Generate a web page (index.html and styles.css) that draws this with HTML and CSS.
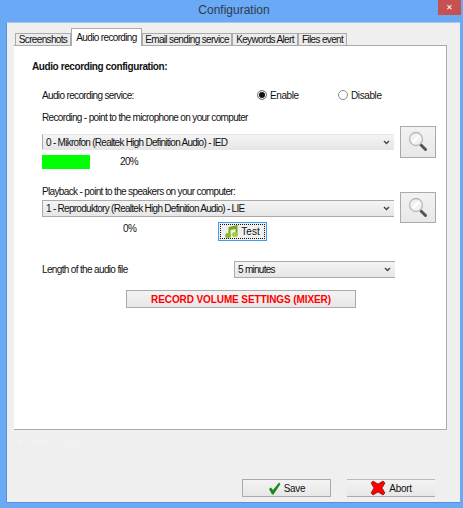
FILE: index.html
```html
<!DOCTYPE html>
<html lang="en">

<head>
    <meta charset="UTF-8">
    <title>Configuration</title>
    <link rel="stylesheet" href="styles.css">
</head>

<body>
<div class="titlebar">
    <span class="title">Configuration</span>
    <span class="close">&#10005;</span>
</div>
<div class="window">
    <div class="tabs">
        <div class="tab tab-screenshot">Screenshots</div>
        <div class="tab tab-audio active">Audio recording</div>
        <div class="tab tab-email">Email sending service</div>
        <div class="tab tab-keywords">Keywords Alert</div>
        <div class="tab tab-files">Files event</div>
    </div>
    <div class="panel">
        <div class="heading">Audio recording configuration:</div>
        <div class="service">
            <span class="service-label">Audio recording service:</span>
            <span class="radio-item enable"><span class="radio checked"></span>Enable</span>
            <span class="radio-item"><span class="radio"></span>Disable</span>
        </div>

        <div class="device device-rec">
            <div class="device-main">
                <div class="line">Recording - point to the microphone on your computer</div>
                <div class="combo combo-soft">
                    <span>0 - Mikrofon (Realtek High Definition Audio) - IED</span>
                    <svg class="chevron" width="7" height="5" viewBox="0 0 7 5"><path d="M1 1l2.5 2.5L6 1" fill="none" stroke="#444" stroke-width="1.4"/></svg>
                </div>
                <div class="level">
                    <div class="level-track"><div class="level-fill" style="width:48px"></div></div>
                    <span class="level-value">20%</span>
                </div>
            </div>
            <button class="search">
                <svg width="22" height="24" viewBox="0 0 22 24">
                    <path d="M14 15l4.500 4.500" stroke="#555" stroke-width="3" stroke-linecap="round"/>
                    <circle cx="9" cy="9" r="6.500" fill="#eef2f7" stroke="#b8b8b8" stroke-width="1.300"/>
                    <path d="M6 12l6-6" stroke="#fff" stroke-width="2.500"/>
                </svg>
            </button>
        </div>

        <div class="device device-play">
            <div class="device-main">
                <div class="line">Playback - point to the speakers on your computer:</div>
                <div class="combo">
                    <span>1 - Reproduktory (Realtek High Definition Audio) - LIE</span>
                    <svg class="chevron" width="7" height="5" viewBox="0 0 7 5"><path d="M1 1l2.5 2.5L6 1" fill="none" stroke="#444" stroke-width="1.4"/></svg>
                </div>
                <div class="level level-play">
                    <span class="level-value">0%</span>
                    <button class="test">
                        <span class="test-inner">
                            <svg width="13" height="13" viewBox="0 0 13 13">
                                <path d="M3.500 10V2L12.500 0V9H10.500V4L5.500 5V10z" fill="#7da61f"/>
                                <ellipse cx="3" cy="10.500" rx="3" ry="2.500" fill="#8dbb25"/>
                                <ellipse cx="10" cy="9.500" rx="3" ry="2.500" fill="#a5cf3a"/>
                            </svg>
                            Test
                        </span>
                    </button>
                </div>
            </div>
            <button class="search">
                <svg width="22" height="24" viewBox="0 0 22 24">
                    <path d="M14 15l4.500 4.500" stroke="#555" stroke-width="3" stroke-linecap="round"/>
                    <circle cx="9" cy="9" r="6.500" fill="#eef2f7" stroke="#b8b8b8" stroke-width="1.300"/>
                    <path d="M6 12l6-6" stroke="#fff" stroke-width="2.500"/>
                </svg>
            </button>
        </div>

        <div class="length">
            <span class="length-label">Length of the audio file</span>
            <div class="combo combo-length">
                <span>5 minutes</span>
                <svg class="chevron" width="7" height="5" viewBox="0 0 7 5"><path d="M1 1l2.5 2.5L6 1" fill="none" stroke="#444" stroke-width="1.4"/></svg>
            </div>
        </div>

        <button class="mixer">RECORD VOLUME SETTINGS (MIXER)</button>
    </div>

    <div class="ghost">Process : Spy.cpl</div>

    <div class="footer">
        <button class="action">
            <svg width="13" height="13" viewBox="0 0 13 13"><path d="M1 7l2-1.500L5 8l6-7.500L12.500 2 5.500 12.500H4z" fill="#1a8a1a"/></svg>
            Save
        </button>
        <button class="action action-about">
            <svg width="16" height="16" viewBox="0 0 16 16"><path d="M1 3l2-2 5 3 5-3 2 2-3 5 3 5-2 2-5-3-5 3-2-2 3-5z" fill="#f00" stroke="#600" stroke-width=".6"/></svg>
            Abort
        </button>
    </div>
</div>
</body>
</html>
```

FILE: styles.css
```css
* {
    box-sizing: border-box;
}

html, body {
    height: 100%;
}

body {
    margin: 0;
    display: flex;
    flex-direction: column;
    background-color: #69a9f6;
    font-family: "Liberation Sans", sans-serif;
    font-size: 10px;
    letter-spacing: -.65px;
    color: #111;
    overflow: hidden;
}

button {
    font-family: inherit;
    font-size: inherit;
    letter-spacing: inherit;
    color: inherit;
    padding: 0;
}

.titlebar {
    height: 22px;
    flex-shrink: 0;
    display: flex;
    justify-content: center;
    padding-left: 5px;
    position: relative;
}

.title {
    font-size: 12px;
    letter-spacing: 0;
    line-height: 21px;
    color: #2f3b4a;
}

.close {
    position: absolute;
    top: 0;
    right: 2px;
    width: 23px;
    height: 15px;
    background-color: #c75050;
    color: #fff;
    font-size: 8px;
    letter-spacing: 0;
    line-height: 15px;
    text-align: center;
}

.window {
    flex: 1;
    margin: 0 3px 5px 6px;
    padding-left: 7px;
    padding-right: 13px;
    display: flex;
    flex-direction: column;
    background-color: #efefef;
    border-top: 1px solid #a9c8ee;
    border-left: 1px solid #5b91d2;
    border-bottom: 1px solid #5b91d2;
}

/* tabs */
.tabs {
    display: flex;
    align-items: flex-end;
    height: 23px;
    flex-shrink: 0;
    position: relative;
    z-index: 1;
    margin-bottom: -1px;
    padding-left: 1px;
}

.tab {
    height: 12px;
    margin-bottom: 1px;
    border: 1px solid #aaa;
    border-bottom: none;
    background-color: #ececec;
    text-align: center;
    line-height: 11px;
    white-space: nowrap;
}

.tab-screenshot { width: 56px; }
.tab-audio { width: 71px; }
.tab-email { width: 90px; }
.tab-keywords { width: 66px; }
.tab-files { width: 49px; }

.tab.active {
    height: 18px;
    margin-bottom: 0;
    background-color: #fff;
    line-height: 17px;
}

.panel {
    height: 385px;
    flex-shrink: 0;
    padding: 14px 10px 0 18px;
    background-color: #fff;
    border-top: 1px solid #aaa;
    border-right: 1px solid #aaa;
    border-bottom: 1px solid #aaa;
}

.heading {
    font-weight: bold;
    letter-spacing: -.4px;
    line-height: 14px;
}

.service {
    display: flex;
    align-items: center;
    height: 14px;
    margin-top: 14px;
    margin-left: 10px;
}

.service-label {
    width: 215px;
}

.radio-item {
    display: flex;
    align-items: center;
    gap: 3px;
    letter-spacing: -.4px;
}

.enable {
    width: 81px;
}

.radio {
    width: 10px;
    height: 10px;
    border-radius: 50%;
    border: 1px solid #888;
    background-color: #fff;
}

.radio.checked {
    background-color: #111;
    box-shadow: inset 0 0 0 1px #fff;
}

/* device rows */
.device {
    display: flex;
    align-items: flex-start;
    gap: 6px;
    margin-left: 10px;
}

.device-rec {
    margin-top: 9px;
}

.device-play {
    margin-top: 16px;
}

.device-main {
    width: 353px;
}

.line {
    line-height: 14px;
    height: 14px;
}

.combo {
    display: flex;
    align-items: center;
    justify-content: space-between;
    height: 17px;
    margin-top: 1px;
    padding: 0 4px 0 3px;
    background: linear-gradient(#f4f4f4, #e6e6e6);
    border: 1px solid #aaa;
    border-right: none;
    letter-spacing: -.72px;
    white-space: nowrap;
}

.combo-soft {
    height: 16px;
    margin-top: 9px;
    border-color: #e6e6e6;
    border-left-color: #aaa;
}

.chevron {
    flex-shrink: 0;
}

.level {
    display: flex;
    align-items: center;
    height: 14px;
    margin-top: 5px;
}

.level-track {
    width: 78px;
    height: 14px;
}

.level-fill {
    height: 100%;
    background-color: #0f0;
}

.level-value {
    line-height: 14px;
}

.level-play {
    align-items: flex-start;
    height: 19px;
}

.level-play .level-value {
    width: 15px;
    margin-left: 81px;
}

.test {
    width: 49px;
    height: 19px;
    margin-left: 80px;
    padding: 1px;
    background-color: #efefef;
    border: 1px solid #3d9bf0;
    letter-spacing: 0;
}

.test-inner {
    display: flex;
    align-items: center;
    justify-content: center;
    gap: 3px;
    height: 100%;
    border: 1px dotted #111;
}

.search {
    display: flex;
    align-items: center;
    justify-content: center;
    width: 36px;
    background: linear-gradient(#f2f2f2, #e8e8e8);
    border: 1px solid #aaa;
}

.device-rec .search {
    height: 32px;
    margin-top: 15px;
}

.device-play .search {
    height: 31px;
    margin-top: 7px;
}

.length {
    display: flex;
    align-items: center;
    margin-top: 20px;
    margin-left: 10px;
}

.length-label {
    width: 192px;
}

.combo-length {
    width: 161px;
    margin-top: 0;
}

.mixer {
    display: block;
    width: 230px;
    height: 18px;
    margin-top: 12px;
    margin-left: 94px;
    background: linear-gradient(#f3f3f3, #e7e7e7);
    border: 1px solid #aaa;
    color: #f00;
    font-weight: bold;
    letter-spacing: -.1px;
}

.ghost {
    margin-top: 5px;
    margin-left: 4px;
    line-height: 14px;
    color: #f3f3f3;
    letter-spacing: 0;
}

/* bottom buttons */
.footer {
    display: flex;
    gap: 16px;
    margin-top: 30px;
    margin-left: 228px;
}

.action {
    display: flex;
    align-items: center;
    justify-content: center;
    gap: 3px;
    width: 89px;
    height: 18px;
    background: linear-gradient(#f3f3f3, #e7e7e7);
    border: 1px solid #aaa;
    letter-spacing: -.3px;
}

.action-about {
    width: 88px;
    border-left: none;
    border-right: none;
    border-top-color: #bbb;
}
```
